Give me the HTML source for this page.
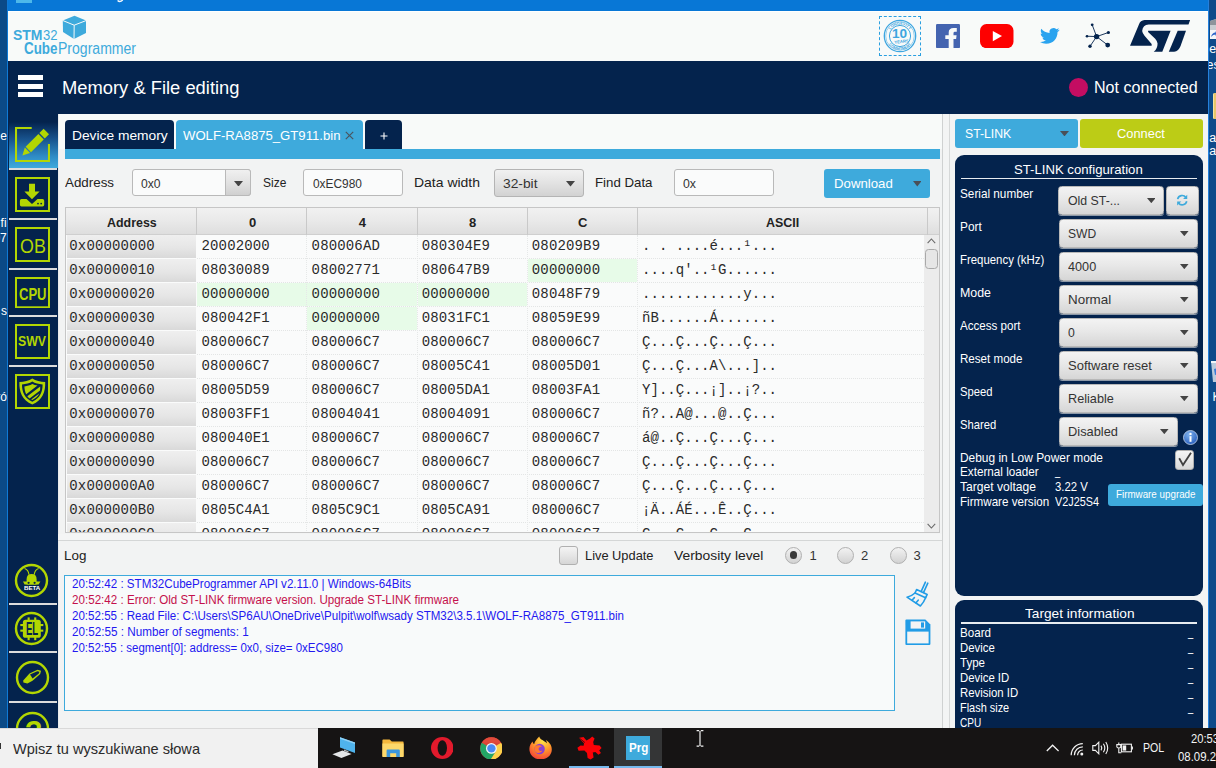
<!DOCTYPE html>
<html lang="pl"><head><meta charset="utf-8"><title>STM32CubeProgrammer</title>
<style>
html,body{margin:0;padding:0;}
body{width:1216px;height:768px;overflow:hidden;position:relative;background:#f2f3f3;font-family:"Liberation Sans","DejaVu Sans",sans-serif;}
#app div,#app span,#app svg{position:absolute;box-sizing:border-box;}
#app{position:absolute;left:0;top:0;width:1216px;height:768px;overflow:hidden;}
.t{white-space:pre;line-height:1;}
.m{font-family:"Liberation Mono","DejaVu Sans Mono",monospace;}
</style></head>
<body><div id="app">
<div style="left:0px;top:0px;width:8px;height:728px;background:#0b4a87;"></div><div style="left:6.8px;top:0px;width:1.4px;height:728px;background:#0f7ad6;"></div><div style="left:1208px;top:0px;width:8px;height:728px;background:#0e4b8a;"></div><div style="left:1208px;top:0px;width:1px;height:728px;background:#2580dc;"></div><div style="left:0;top:0;width:7px;height:728px;overflow:hidden;"><span class="t" style="top:130.00px;font-size:12px;color:#ffffff;left:7.00px;transform:translateX(-100%);">e</span><span class="t" style="top:217.00px;font-size:12px;color:#ffffff;left:6.60px;transform:translateX(-100%);">fi</span><span class="t" style="top:232.00px;font-size:12px;color:#ffffff;left:6.80px;transform:translateX(-100%);">07</span><span class="t" style="top:305.00px;font-size:12px;color:#ffffff;left:7.00px;transform:translateX(-100%);">s</span><span class="t" style="top:391.00px;font-size:12px;color:#ffffff;left:7.00px;transform:translateX(-100%);">ró</span></div><div style="left:1209px;top:0;width:7px;height:728px;overflow:hidden;"><svg style="left:0.5px;top:18.6px;" width="16" height="20" viewBox="0 0 16 20"><path d="M0 2 L6 0 H16 V20 H0 Z" fill="#c9cdd2"/><path d="M0 2 L6 0 V6 H0 Z" fill="#8e949b"/><rect x="0" y="11" width="7" height="9" fill="#f4f6f8"/><path d="M1 18 Q2 13.5 5.5 13.5 V12 L7 15 L5.5 17 V15.6 Q3 15.6 1 18 Z" fill="#2a62c8"/></svg><span class="t" style="top:43.00px;font-size:12.5px;color:#ffffff;left:0.30px;">e</span><span class="t" style="top:59.00px;font-size:12.5px;color:#ffffff;left:-2.40px;">es</span><div style="left:3.6px;top:92.8px;width:8px;height:26.6px;background:#e8c66a;border-radius:1.5px;border-left:1px solid #f6e3a0;"></div><span class="t" style="top:132.00px;font-size:12.5px;color:#ffffff;left:0.20px;">ar</span><span class="t" style="top:145.00px;font-size:12.5px;color:#ffffff;left:0.20px;">ar</span><svg style="left:1.8px;top:358.7px;" width="14" height="23" viewBox="0 0 14 23"><path d="M0 2 H14 L12 23 H2 Z" fill="#d9e2ea" opacity="0.85"/><path d="M0 2 H14 V4 H0 Z" fill="#f1f5f8"/><path d="M3 10 L8 9 L9 15 L4 16 Z" fill="#3b7bd6"/></svg><span class="t" style="top:391.00px;font-size:12px;color:#ffffff;left:3.60px;">K</span></div><div style="left:8px;top:0px;width:1200px;height:11px;background:#0877d6;"></div><div style="left:16px;top:0px;width:16px;height:3px;background:#4db8ea;"></div><svg style="left:117px;top:0px;" width="7" height="3" viewBox="0 0 7 3"><path d="M0.6 0.4 Q2.8 2.6 5.8 0 " stroke="#f4f8fc" stroke-width="1.4" fill="none"/></svg><div style="left:8px;top:11px;width:1200px;height:50px;background:#f8faf9;"></div><div style="left:8px;top:11px;width:1200px;height:1px;background:#ffffff;"></div><div style="left:8px;top:61px;width:1200px;height:53px;background:#04234d;"></div><div style="left:8px;top:114px;width:49.5px;height:614px;background:#04234d;"></div><div style="left:57.5px;top:114px;width:1150.5px;height:614px;background:#f2f3f3;"></div><span class="t" style="top:28.00px;font-size:14.2px;color:#3eaadc;font-weight:700;left:13.00px;transform-origin:0 0;transform:scaleX(0.9849);">STM</span><span class="t" style="top:28.00px;font-size:14.2px;color:#3eaadc;left:43.30px;transform-origin:0 0;transform:scaleX(0.9188);">32</span><span class="t" style="top:40.00px;font-size:16.2px;color:#3eaadc;font-weight:700;left:23.75px;transform-origin:0 0;transform:scaleX(0.8278);">Cube</span><span class="t" style="top:41.00px;font-size:15.6px;color:#3eaadc;left:58.00px;transform-origin:0 0;transform:scaleX(0.9001);">Programmer</span><svg style="left:62px;top:15px;" width="25" height="25" viewBox="0 0 25 25"><path d="M12.5 0.8 L24 5.5 L24 18 L12 24 L1 17 L0.8 5.5 Z" fill="#3eaadc"/><path d="M1 5.6 L12.2 10.2 L24 5.6 M12.2 10.2 L12 24" stroke="#f8faf9" stroke-width="1" fill="none"/></svg><div style="left:18px;top:75px;width:25px;height:5px;background:#ffffff;"></div><div style="left:18px;top:83.7px;width:25px;height:5px;background:#ffffff;"></div><div style="left:18px;top:92.3px;width:25px;height:5px;background:#ffffff;"></div><span class="t" style="top:80.00px;font-size:17.6px;color:#ffffff;left:62.30px;transform-origin:0 0;transform:scaleX(1.0433);">Memory &amp; File editing</span><div style="left:1069px;top:78.2px;width:19px;height:19px;background:#c40d62;border-radius:50%;"></div><span class="t" style="top:80.00px;font-size:15.6px;color:#ffffff;left:1093.90px;transform-origin:0 0;transform:scaleX(1.0302);">Not connected</span><div style="left:9px;top:121.5px;width:48.5px;height:46.5px;background:linear-gradient(#04234d,#17508a 35%,#2f8cc6 75%,#3eaadc);"></div><div style="left:9px;top:168px;width:48.2px;height:2.2px;background:#dcdcdc;"></div><div style="left:9px;top:218.2px;width:48.2px;height:2.2px;background:#dcdcdc;"></div><div style="left:9px;top:268px;width:48.2px;height:2.2px;background:#dcdcdc;"></div><div style="left:9px;top:315.2px;width:48.2px;height:2.2px;background:#dcdcdc;"></div><div style="left:9px;top:365.2px;width:48.2px;height:2.2px;background:#dcdcdc;"></div><svg style="left:15px;top:127px;" width="35" height="35" viewBox="0 0 35 35"><path d="M16.7 1 H1 V34 H34 V17" fill="none" stroke="#b3d602" stroke-width="2.1"/><g transform="translate(7.4,28.4) rotate(-45)" fill="#b3d602"><path d="M0 0 L7.2 -3.8 L7.2 3.8 Z"/><rect x="8.4" y="-3.8" width="18" height="7.6"/><rect x="27.8" y="-3.8" width="6" height="7.6"/></g></svg><svg style="left:15px;top:177px;" width="35" height="35" viewBox="0 0 35 35"><rect x="1" y="1" width="33" height="33" fill="none" stroke="#b3d602" stroke-width="2"/><path d="M14 6.7 H20 V14.5 H24.6 L17 22.3 L9.4 14.5 H14 Z" fill="#b3d602"/><path d="M6.5 22 H11.5 L17 27 L22.5 22 H27.5 Q29.2 22 29.2 23.7 V27.8 Q29.2 29.5 27.5 29.5 H6.5 Q4.9 29.5 4.9 27.8 V23.7 Q4.9 22 6.5 22 Z" fill="#b3d602"/><circle cx="23" cy="26.6" r="0.9" fill="#04234d"/><circle cx="26.2" cy="26.6" r="0.9" fill="#04234d"/></svg><svg style="left:15px;top:227px;" width="35" height="35" viewBox="0 0 35 35"><rect x="1" y="1" width="33" height="33" fill="none" stroke="#b3d602" stroke-width="2"/></svg><span class="t" style="top:235.00px;font-size:21px;color:#b3d602;left:19.60px;transform-origin:0 0;transform:scaleX(0.8503);">OB</span><svg style="left:15px;top:277px;" width="35" height="31.3" viewBox="0 0 35 31.3"><rect x="1" y="1" width="33" height="29.3" fill="none" stroke="#b3d602" stroke-width="2"/></svg><span class="t" style="top:286.00px;font-size:16.5px;color:#b3d602;font-weight:700;left:18.75px;transform-origin:0 0;transform:scaleX(0.7892);">CPU</span><svg style="left:15px;top:324px;" width="35" height="35" viewBox="0 0 35 35"><rect x="1" y="1" width="33" height="33" fill="none" stroke="#b3d602" stroke-width="2"/></svg><span class="t" style="top:333.00px;font-size:15px;color:#b3d602;font-weight:700;left:18.30px;transform-origin:0 0;transform:scaleX(0.8194);">SWV</span><svg style="left:15px;top:374px;" width="35" height="35" viewBox="0 0 35 35"><rect x="1" y="1" width="33" height="33" fill="none" stroke="#b3d602" stroke-width="2"/><path d="M17.3 4.6 C14 7 9 8 4.4 8 C4 18 7 26 17.3 30.6 C27.6 26 30.6 18 30.2 8 C25.6 8 20.6 7 17.3 4.6 Z" fill="#b3d602"/><path d="M17.3 7.6 C14.5 9.4 11 10.3 7 10.5 C7 18 9.5 24 17.3 27.8 C25.1 24 27.6 18 27.6 10.5 C23.6 10.3 20.1 9.4 17.3 7.6 Z" fill="#04234d"/><path d="M17.3 10 C15 11.3 12.4 12.1 9.4 12.4 C9.6 15.5 10 18 11.2 20.2 L22.5 11.6 C20.5 11.3 18.8 10.8 17.3 10 Z M25.2 12.4 L12.3 22.2 C13 23.1 13.8 23.8 14.6 24.4 L25 16.6 C25.2 15.3 25.2 13.9 25.2 12.4 Z M24.3 19.6 L16.2 25.4 L17.3 26 C21 24.2 23.2 22.2 24.3 19.6 Z" fill="#b3d602"/></svg><div style="left:9px;top:603.2px;width:48.2px;height:2px;background:#dcdcdc;"></div><div style="left:9px;top:651.2px;width:48.2px;height:2px;background:#dcdcdc;"></div><div style="left:9px;top:701.2px;width:48.2px;height:2px;background:#dcdcdc;"></div><svg style="left:14px;top:562.5px;" width="35" height="35" viewBox="0 0 35 35"><circle cx="17.5" cy="17.5" r="15.5" fill="none" stroke="#b3d602" stroke-width="2.4"/><path d="M12.6 21.6 V16.2 Q12.6 11 17.6 11 Q22.6 11 22.6 16.2 V21.6 Z" fill="#b3d602"/><path d="M9 18.6 H26.4 L24.6 21.6 H10.6 Z" fill="#b3d602"/><path d="M15 11.8 C14.6 8.5 13 6.4 10.6 5.6 M20.2 11.8 C20.6 8.5 22.2 6.4 24.6 5.6" stroke="#b3d602" stroke-width="1.1" fill="none"/><circle cx="14.6" cy="19.8" r="1.1" fill="#04234d"/><circle cx="20.6" cy="19.8" r="1.1" fill="#04234d"/></svg><span class="t" style="top:585.00px;font-size:6.2px;color:#ffffff;font-weight:700;left:23.55px;transform-origin:0 0;transform:scaleX(0.9945);">BETA</span><svg style="left:14px;top:611px;" width="35" height="35" viewBox="0 0 35 35"><circle cx="17.5" cy="17.5" r="15.5" fill="none" stroke="#b3d602" stroke-width="2.4"/><rect x="13.6" y="6.4" width="2.1" height="22.8" fill="#b3d602"/><rect x="20.2" y="6.4" width="2.1" height="22.8" fill="#b3d602"/><rect x="6.3" y="13" width="23" height="2.1" fill="#b3d602"/><rect x="6.3" y="18.6" width="23" height="2.1" fill="#b3d602"/><rect x="8.9" y="8.8" width="17.9" height="18" rx="2.6" fill="#b3d602"/></svg><span class="t" style="top:621.00px;font-size:17.5px;color:#04234d;font-weight:700;left:25.50px;transform-origin:0 0;transform:scaleX(0.5453);">EL</span><svg style="left:14.5px;top:660.3px;" width="35" height="35" viewBox="0 0 35 35"><circle cx="17.5" cy="17.5" r="15.5" fill="none" stroke="#b3d602" stroke-width="2.4"/><path d="M8.2 20.5 L14.5 13.5 L22.5 9.8 L26 10.8 L25.2 14 L17.5 20.8 L12.4 23.4 L8.4 22.6 Z" fill="#b3d602"/><path d="M15 14.6 L22.3 11.2 L24.4 11.8 L23.9 13.4 L17.6 18.4 Z" fill="#04234d"/></svg><svg style="left:14.5px;top:711.2px;" width="35" height="35" viewBox="0 0 35 35"><circle cx="17.5" cy="17.5" r="15.5" fill="none" stroke="#b3d602" stroke-width="2.4"/></svg><span class="t" style="top:717.00px;font-size:29px;color:#b3d602;font-weight:700;left:33.70px;transform:translateX(-50%);">?</span><div style="left:58px;top:114px;width:884px;height:35px;background:#f8faf9;"></div><div style="left:57.5px;top:114px;width:1px;height:614px;background:#e9ebeb;"></div><div style="left:65px;top:120px;width:109px;height:29px;background:#04234d;border-radius:4px 4px 0 0;"></div><div style="left:176px;top:120px;width:187px;height:30px;background:#3eaadc;border-radius:4px 4px 0 0;"></div><div style="left:365px;top:120px;width:36.7px;height:29px;background:#04234d;border-radius:4px 4px 0 0;"></div><div style="left:65px;top:149px;width:875px;height:9.7px;background:#3eaadc;"></div><span class="t" style="top:129.00px;font-size:13.6px;color:#ffffff;left:71.50px;transform-origin:0 0;transform:scaleX(1.0135);">Device memory</span><span class="t" style="top:129.00px;font-size:13.6px;color:#ffffff;left:182.50px;transform-origin:0 0;transform:scaleX(0.9665);">WOLF-RA8875_GT911.bin</span><svg style="left:344.5px;top:130.5px;" width="9" height="9" viewBox="0 0 9 9"><path d="M0.8 0.8 L8.2 8.2 M8.2 0.8 L0.8 8.2" stroke="#4a5560" stroke-width="1.2" fill="none"/></svg><svg style="left:379.5px;top:131.5px;" width="8" height="8" viewBox="0 0 8 8"><path d="M4 0.5 V7.5 M0.5 4 H7.5" stroke="#ffffff" stroke-width="1.1" fill="none"/></svg><span class="t" style="top:176.00px;font-size:13px;color:#222;left:65.30px;transform-origin:0 0;transform:scaleX(1.0272);">Address</span><div style="left:132.4px;top:169.2px;width:119px;height:27.2px;background:#fafbfb;border:1px solid #b9b9b9;border-radius:3px;"></div><div style="left:225.4px;top:169.2px;width:26px;height:27.2px;background:linear-gradient(#f0f0f0,#e2e2e2 50%,#d0d0d0);border:1px solid #b9b9b9;border-radius:0 3px 3px 0;"></div><svg style="left:234.2px;top:180.8px;" width="9" height="5.6" viewBox="0 0 9 5.6"><path d="M0 0 H9 L4.5 5.6 Z" fill="#444"/></svg><span class="t" style="top:178.00px;font-size:12.4px;color:#333;left:141.30px;transform-origin:0 0;transform:scaleX(0.9808);">0x0</span><span class="t" style="top:176.00px;font-size:13px;color:#222;left:262.70px;transform-origin:0 0;transform:scaleX(0.9211);">Size</span><div style="left:303px;top:169.2px;width:100px;height:27.2px;background:#fafbfb;border:1px solid #b9b9b9;border-radius:3px;"></div><span class="t" style="top:178.00px;font-size:12.4px;color:#333;left:312.70px;transform-origin:0 0;transform:scaleX(0.9611);">0xEC980</span><span class="t" style="top:176.00px;font-size:13px;color:#222;left:413.50px;transform-origin:0 0;transform:scaleX(1.0745);">Data width</span><div style="left:494px;top:169.2px;width:89.6px;height:27.6px;background:linear-gradient(#f1f1f1,#e4e4e4 45%,#d2d2d2);border:1px solid #b4b4b4;border-radius:3px;"></div><span class="t" style="top:178.00px;font-size:12.4px;color:#333;left:503.30px;transform-origin:0 0;transform:scaleX(1.1129);">32-bit</span><svg style="left:566px;top:181px;" width="9" height="5.6" viewBox="0 0 9 5.6"><path d="M0 0 H9 L4.5 5.6 Z" fill="#444"/></svg><span class="t" style="top:176.00px;font-size:13px;color:#222;left:595.00px;transform-origin:0 0;transform:scaleX(1.0200);">Find Data</span><div style="left:674px;top:169.2px;width:99.6px;height:27.2px;background:#fafbfb;border:1px solid #b9b9b9;border-radius:3px;"></div><span class="t" style="top:178.00px;font-size:12.4px;color:#333;left:683.00px;transform-origin:0 0;transform:scaleX(0.9928);">0x</span><div style="left:824px;top:168.8px;width:106px;height:29.2px;background:#3eaadc;border-radius:3px;"></div><span class="t" style="top:178.00px;font-size:12.6px;color:#ffffff;left:833.80px;transform-origin:0 0;transform:scaleX(1.0497);">Download</span><svg style="left:912.6px;top:181.2px;" width="8.6" height="5.4" viewBox="0 0 8.6 5.4"><path d="M0 0 H8.6 L4.3 5.4 Z" fill="#4a5058"/></svg><div style="left:65px;top:207.3px;width:874.8px;height:325.7px;background:#fafbfb;border:1px solid #c6c6c6;"></div><div style="left:66px;top:208px;width:872.8px;height:26.6px;background:linear-gradient(#f1f1f1,#e9e9e9 50%,#dedede);border-bottom:1px solid #cfcfcf;"></div><div style="left:196.3px;top:208px;width:1px;height:26.6px;background:#c9c9c9;"></div><div style="left:306.3px;top:208px;width:1px;height:26.6px;background:#c9c9c9;"></div><div style="left:416.5px;top:208px;width:1px;height:26.6px;background:#c9c9c9;"></div><div style="left:526.5px;top:208px;width:1px;height:26.6px;background:#c9c9c9;"></div><div style="left:636.5px;top:208px;width:1px;height:26.6px;background:#c9c9c9;"></div><div style="left:926.9px;top:208px;width:1px;height:26.6px;background:#c9c9c9;"></div><span class="t" style="top:216.00px;font-size:13px;color:#222;font-weight:700;left:107.15px;transform-origin:0 0;transform:scaleX(0.9552);">Address</span><span class="t" style="top:216.00px;font-size:13px;color:#222;font-weight:700;left:252.60px;transform:translateX(-50%);">0</span><span class="t" style="top:216.00px;font-size:13px;color:#222;font-weight:700;left:362.30px;transform:translateX(-50%);">4</span><span class="t" style="top:216.00px;font-size:13px;color:#222;font-weight:700;left:472.70px;transform:translateX(-50%);">8</span><span class="t" style="top:216.00px;font-size:13px;color:#222;font-weight:700;left:582.70px;transform:translateX(-50%);">C</span><span class="t" style="top:216.00px;font-size:13px;color:#222;font-weight:700;left:766.00px;transform-origin:0 0;transform:scaleX(0.9575);">ASCII</span><div style="left:66.5px;top:234.5px;width:857px;height:297.5px;overflow:hidden;"><div style="left:0px;top:0px;width:129.8px;height:23.4px;background:linear-gradient(#efefef,#e6e6e6 55%,#d9d9d9);"></div><div style="left:130px;top:23.6px;width:727px;height:1px;border-top:1px dotted #e3e5e5;"></div><span class="t m" style="top:4.00px;font-size:14px;color:#2a2a2a;left:2.80px;letter-spacing:0.15px;">0x00000000</span><span class="t m" style="top:4.00px;font-size:14px;color:#2a2a2a;left:135.00px;letter-spacing:0.15px;">20002000</span><span class="t m" style="top:4.00px;font-size:14px;color:#2a2a2a;left:245.10px;letter-spacing:0.15px;">080006AD</span><span class="t m" style="top:4.00px;font-size:14px;color:#2a2a2a;left:355.20px;letter-spacing:0.15px;">080304E9</span><span class="t m" style="top:4.00px;font-size:14px;color:#2a2a2a;left:465.30px;letter-spacing:0.15px;">080209B9</span><span class="t m" style="top:4.00px;font-size:14px;color:#2a2a2a;left:575.50px;letter-spacing:0.04px;">. . ....é...¹...</span><div style="left:0px;top:24px;width:129.8px;height:23.4px;background:linear-gradient(#efefef,#e6e6e6 55%,#d9d9d9);"></div><div style="left:461.0px;top:24px;width:109.5px;height:23.6px;background:#e7fbe8;"></div><div style="left:130px;top:47.6px;width:727px;height:1px;border-top:1px dotted #e3e5e5;"></div><span class="t m" style="top:28.00px;font-size:14px;color:#2a2a2a;left:2.80px;letter-spacing:0.15px;">0x00000010</span><span class="t m" style="top:28.00px;font-size:14px;color:#2a2a2a;left:135.00px;letter-spacing:0.15px;">08030089</span><span class="t m" style="top:28.00px;font-size:14px;color:#2a2a2a;left:245.10px;letter-spacing:0.15px;">08002771</span><span class="t m" style="top:28.00px;font-size:14px;color:#2a2a2a;left:355.20px;letter-spacing:0.15px;">080647B9</span><span class="t m" style="top:28.00px;font-size:14px;color:#2a2a2a;left:465.30px;letter-spacing:0.15px;">00000000</span><span class="t m" style="top:28.00px;font-size:14px;color:#2a2a2a;left:575.50px;letter-spacing:0.04px;">....q'..¹G......</span><div style="left:0px;top:48px;width:129.8px;height:23.4px;background:linear-gradient(#efefef,#e6e6e6 55%,#d9d9d9);"></div><div style="left:130.8px;top:48px;width:109.5px;height:23.6px;background:#e7fbe8;"></div><div style="left:240.8px;top:48px;width:109.5px;height:23.6px;background:#e7fbe8;"></div><div style="left:351.0px;top:48px;width:109.5px;height:23.6px;background:#e7fbe8;"></div><div style="left:130px;top:71.6px;width:727px;height:1px;border-top:1px dotted #e3e5e5;"></div><span class="t m" style="top:52.00px;font-size:14px;color:#2a2a2a;left:2.80px;letter-spacing:0.15px;">0x00000020</span><span class="t m" style="top:52.00px;font-size:14px;color:#2a2a2a;left:135.00px;letter-spacing:0.15px;">00000000</span><span class="t m" style="top:52.00px;font-size:14px;color:#2a2a2a;left:245.10px;letter-spacing:0.15px;">00000000</span><span class="t m" style="top:52.00px;font-size:14px;color:#2a2a2a;left:355.20px;letter-spacing:0.15px;">00000000</span><span class="t m" style="top:52.00px;font-size:14px;color:#2a2a2a;left:465.30px;letter-spacing:0.15px;">08048F79</span><span class="t m" style="top:52.00px;font-size:14px;color:#2a2a2a;left:575.50px;letter-spacing:0.04px;">............y...</span><div style="left:0px;top:72px;width:129.8px;height:23.4px;background:linear-gradient(#efefef,#e6e6e6 55%,#d9d9d9);"></div><div style="left:240.8px;top:72px;width:109.5px;height:23.6px;background:#e7fbe8;"></div><div style="left:130px;top:95.6px;width:727px;height:1px;border-top:1px dotted #e3e5e5;"></div><span class="t m" style="top:76.00px;font-size:14px;color:#2a2a2a;left:2.80px;letter-spacing:0.15px;">0x00000030</span><span class="t m" style="top:76.00px;font-size:14px;color:#2a2a2a;left:135.00px;letter-spacing:0.15px;">080042F1</span><span class="t m" style="top:76.00px;font-size:14px;color:#2a2a2a;left:245.10px;letter-spacing:0.15px;">00000000</span><span class="t m" style="top:76.00px;font-size:14px;color:#2a2a2a;left:355.20px;letter-spacing:0.15px;">08031FC1</span><span class="t m" style="top:76.00px;font-size:14px;color:#2a2a2a;left:465.30px;letter-spacing:0.15px;">08059E99</span><span class="t m" style="top:76.00px;font-size:14px;color:#2a2a2a;left:575.50px;letter-spacing:0.04px;">ñB......Á.......</span><div style="left:0px;top:96px;width:129.8px;height:23.4px;background:linear-gradient(#efefef,#e6e6e6 55%,#d9d9d9);"></div><div style="left:130px;top:119.6px;width:727px;height:1px;border-top:1px dotted #e3e5e5;"></div><span class="t m" style="top:100.00px;font-size:14px;color:#2a2a2a;left:2.80px;letter-spacing:0.15px;">0x00000040</span><span class="t m" style="top:100.00px;font-size:14px;color:#2a2a2a;left:135.00px;letter-spacing:0.15px;">080006C7</span><span class="t m" style="top:100.00px;font-size:14px;color:#2a2a2a;left:245.10px;letter-spacing:0.15px;">080006C7</span><span class="t m" style="top:100.00px;font-size:14px;color:#2a2a2a;left:355.20px;letter-spacing:0.15px;">080006C7</span><span class="t m" style="top:100.00px;font-size:14px;color:#2a2a2a;left:465.30px;letter-spacing:0.15px;">080006C7</span><span class="t m" style="top:100.00px;font-size:14px;color:#2a2a2a;left:575.50px;letter-spacing:0.04px;">Ç...Ç...Ç...Ç...</span><div style="left:0px;top:120px;width:129.8px;height:23.4px;background:linear-gradient(#efefef,#e6e6e6 55%,#d9d9d9);"></div><div style="left:130px;top:143.6px;width:727px;height:1px;border-top:1px dotted #e3e5e5;"></div><span class="t m" style="top:124.00px;font-size:14px;color:#2a2a2a;left:2.80px;letter-spacing:0.15px;">0x00000050</span><span class="t m" style="top:124.00px;font-size:14px;color:#2a2a2a;left:135.00px;letter-spacing:0.15px;">080006C7</span><span class="t m" style="top:124.00px;font-size:14px;color:#2a2a2a;left:245.10px;letter-spacing:0.15px;">080006C7</span><span class="t m" style="top:124.00px;font-size:14px;color:#2a2a2a;left:355.20px;letter-spacing:0.15px;">08005C41</span><span class="t m" style="top:124.00px;font-size:14px;color:#2a2a2a;left:465.30px;letter-spacing:0.15px;">08005D01</span><span class="t m" style="top:124.00px;font-size:14px;color:#2a2a2a;left:575.50px;letter-spacing:0.04px;">Ç...Ç...A\...]..</span><div style="left:0px;top:144px;width:129.8px;height:23.4px;background:linear-gradient(#efefef,#e6e6e6 55%,#d9d9d9);"></div><div style="left:130px;top:167.6px;width:727px;height:1px;border-top:1px dotted #e3e5e5;"></div><span class="t m" style="top:148.00px;font-size:14px;color:#2a2a2a;left:2.80px;letter-spacing:0.15px;">0x00000060</span><span class="t m" style="top:148.00px;font-size:14px;color:#2a2a2a;left:135.00px;letter-spacing:0.15px;">08005D59</span><span class="t m" style="top:148.00px;font-size:14px;color:#2a2a2a;left:245.10px;letter-spacing:0.15px;">080006C7</span><span class="t m" style="top:148.00px;font-size:14px;color:#2a2a2a;left:355.20px;letter-spacing:0.15px;">08005DA1</span><span class="t m" style="top:148.00px;font-size:14px;color:#2a2a2a;left:465.30px;letter-spacing:0.15px;">08003FA1</span><span class="t m" style="top:148.00px;font-size:14px;color:#2a2a2a;left:575.50px;letter-spacing:0.04px;">Y]..Ç...¡]..¡?..</span><div style="left:0px;top:168px;width:129.8px;height:23.4px;background:linear-gradient(#efefef,#e6e6e6 55%,#d9d9d9);"></div><div style="left:130px;top:191.6px;width:727px;height:1px;border-top:1px dotted #e3e5e5;"></div><span class="t m" style="top:172.00px;font-size:14px;color:#2a2a2a;left:2.80px;letter-spacing:0.15px;">0x00000070</span><span class="t m" style="top:172.00px;font-size:14px;color:#2a2a2a;left:135.00px;letter-spacing:0.15px;">08003FF1</span><span class="t m" style="top:172.00px;font-size:14px;color:#2a2a2a;left:245.10px;letter-spacing:0.15px;">08004041</span><span class="t m" style="top:172.00px;font-size:14px;color:#2a2a2a;left:355.20px;letter-spacing:0.15px;">08004091</span><span class="t m" style="top:172.00px;font-size:14px;color:#2a2a2a;left:465.30px;letter-spacing:0.15px;">080006C7</span><span class="t m" style="top:172.00px;font-size:14px;color:#2a2a2a;left:575.50px;letter-spacing:0.04px;">ñ?..A@...@..Ç...</span><div style="left:0px;top:192px;width:129.8px;height:23.4px;background:linear-gradient(#efefef,#e6e6e6 55%,#d9d9d9);"></div><div style="left:130px;top:215.6px;width:727px;height:1px;border-top:1px dotted #e3e5e5;"></div><span class="t m" style="top:196.00px;font-size:14px;color:#2a2a2a;left:2.80px;letter-spacing:0.15px;">0x00000080</span><span class="t m" style="top:196.00px;font-size:14px;color:#2a2a2a;left:135.00px;letter-spacing:0.15px;">080040E1</span><span class="t m" style="top:196.00px;font-size:14px;color:#2a2a2a;left:245.10px;letter-spacing:0.15px;">080006C7</span><span class="t m" style="top:196.00px;font-size:14px;color:#2a2a2a;left:355.20px;letter-spacing:0.15px;">080006C7</span><span class="t m" style="top:196.00px;font-size:14px;color:#2a2a2a;left:465.30px;letter-spacing:0.15px;">080006C7</span><span class="t m" style="top:196.00px;font-size:14px;color:#2a2a2a;left:575.50px;letter-spacing:0.04px;">á@..Ç...Ç...Ç...</span><div style="left:0px;top:216px;width:129.8px;height:23.4px;background:linear-gradient(#efefef,#e6e6e6 55%,#d9d9d9);"></div><div style="left:130px;top:239.6px;width:727px;height:1px;border-top:1px dotted #e3e5e5;"></div><span class="t m" style="top:220.00px;font-size:14px;color:#2a2a2a;left:2.80px;letter-spacing:0.15px;">0x00000090</span><span class="t m" style="top:220.00px;font-size:14px;color:#2a2a2a;left:135.00px;letter-spacing:0.15px;">080006C7</span><span class="t m" style="top:220.00px;font-size:14px;color:#2a2a2a;left:245.10px;letter-spacing:0.15px;">080006C7</span><span class="t m" style="top:220.00px;font-size:14px;color:#2a2a2a;left:355.20px;letter-spacing:0.15px;">080006C7</span><span class="t m" style="top:220.00px;font-size:14px;color:#2a2a2a;left:465.30px;letter-spacing:0.15px;">080006C7</span><span class="t m" style="top:220.00px;font-size:14px;color:#2a2a2a;left:575.50px;letter-spacing:0.04px;">Ç...Ç...Ç...Ç...</span><div style="left:0px;top:240px;width:129.8px;height:23.4px;background:linear-gradient(#efefef,#e6e6e6 55%,#d9d9d9);"></div><div style="left:130px;top:263.6px;width:727px;height:1px;border-top:1px dotted #e3e5e5;"></div><span class="t m" style="top:244.00px;font-size:14px;color:#2a2a2a;left:2.80px;letter-spacing:0.15px;">0x000000A0</span><span class="t m" style="top:244.00px;font-size:14px;color:#2a2a2a;left:135.00px;letter-spacing:0.15px;">080006C7</span><span class="t m" style="top:244.00px;font-size:14px;color:#2a2a2a;left:245.10px;letter-spacing:0.15px;">080006C7</span><span class="t m" style="top:244.00px;font-size:14px;color:#2a2a2a;left:355.20px;letter-spacing:0.15px;">080006C7</span><span class="t m" style="top:244.00px;font-size:14px;color:#2a2a2a;left:465.30px;letter-spacing:0.15px;">080006C7</span><span class="t m" style="top:244.00px;font-size:14px;color:#2a2a2a;left:575.50px;letter-spacing:0.04px;">Ç...Ç...Ç...Ç...</span><div style="left:0px;top:264px;width:129.8px;height:23.4px;background:linear-gradient(#efefef,#e6e6e6 55%,#d9d9d9);"></div><div style="left:130px;top:287.6px;width:727px;height:1px;border-top:1px dotted #e3e5e5;"></div><span class="t m" style="top:268.00px;font-size:14px;color:#2a2a2a;left:2.80px;letter-spacing:0.15px;">0x000000B0</span><span class="t m" style="top:268.00px;font-size:14px;color:#2a2a2a;left:135.00px;letter-spacing:0.15px;">0805C4A1</span><span class="t m" style="top:268.00px;font-size:14px;color:#2a2a2a;left:245.10px;letter-spacing:0.15px;">0805C9C1</span><span class="t m" style="top:268.00px;font-size:14px;color:#2a2a2a;left:355.20px;letter-spacing:0.15px;">0805CA91</span><span class="t m" style="top:268.00px;font-size:14px;color:#2a2a2a;left:465.30px;letter-spacing:0.15px;">080006C7</span><span class="t m" style="top:268.00px;font-size:14px;color:#2a2a2a;left:575.50px;letter-spacing:0.04px;">¡Ä..ÁÉ...Ê..Ç...</span><div style="left:0px;top:288px;width:129.8px;height:23.4px;background:linear-gradient(#efefef,#e6e6e6 55%,#d9d9d9);"></div><div style="left:130px;top:311.6px;width:727px;height:1px;border-top:1px dotted #e3e5e5;"></div><span class="t m" style="top:292.00px;font-size:14px;color:#2a2a2a;left:2.80px;letter-spacing:0.15px;">0x000000C0</span><span class="t m" style="top:292.00px;font-size:14px;color:#2a2a2a;left:135.00px;letter-spacing:0.15px;">080006C7</span><span class="t m" style="top:292.00px;font-size:14px;color:#2a2a2a;left:245.10px;letter-spacing:0.15px;">080006C7</span><span class="t m" style="top:292.00px;font-size:14px;color:#2a2a2a;left:355.20px;letter-spacing:0.15px;">080006C7</span><span class="t m" style="top:292.00px;font-size:14px;color:#2a2a2a;left:465.30px;letter-spacing:0.15px;">080006C7</span><span class="t m" style="top:292.00px;font-size:14px;color:#2a2a2a;left:575.50px;letter-spacing:0.04px;">Ç...Ç...Ç...Ç...</span><div style="left:239.8px;top:0px;width:1px;height:300px;border-left:1px dotted #e6e8e8;"></div><div style="left:350.0px;top:0px;width:1px;height:300px;border-left:1px dotted #e6e8e8;"></div><div style="left:460.0px;top:0px;width:1px;height:300px;border-left:1px dotted #e6e8e8;"></div><div style="left:570.0px;top:0px;width:1px;height:300px;border-left:1px dotted #e6e8e8;"></div></div><div style="left:923.5px;top:234.5px;width:15.3px;height:297.5px;background:#ececec;"></div><svg style="left:927.2px;top:237.6px;" width="9" height="6" viewBox="0 0 9 6"><path d="M0.6 5.2 L4.4 1 L8.2 5.2" stroke="#6a6a6a" stroke-width="1.1" fill="none"/></svg><svg style="left:927.2px;top:523.4px;" width="9" height="6" viewBox="0 0 9 6"><path d="M0.6 0.8 L4.4 5 L8.2 0.8" stroke="#6a6a6a" stroke-width="1.1" fill="none"/></svg><div style="left:925px;top:249.2px;width:12.6px;height:19.4px;background:#e6e6e6;border:1px solid #a9a9a9;border-radius:3.5px;"></div><div style="left:58px;top:533.5px;width:884px;height:7.5px;background:#f4f5f5;"></div><div style="left:58px;top:540.2px;width:884px;height:1px;background:#d4d6d6;"></div><span class="t" style="top:549.00px;font-size:13px;color:#222;left:63.60px;transform-origin:0 0;transform:scaleX(1.0321);">Log</span><div style="left:559px;top:546px;width:18.6px;height:18.6px;background:linear-gradient(#f4f4f4,#e6e6e6 50%,#d6d6d6);border:1px solid #b0b0b0;border-radius:3px;"></div><span class="t" style="top:550.00px;font-size:12.3px;color:#222;left:584.60px;transform-origin:0 0;transform:scaleX(1.0436);">Live Update</span><span class="t" style="top:550.00px;font-size:12.8px;color:#222;left:674.40px;transform-origin:0 0;transform:scaleX(1.0834);">Verbosity level</span><div style="left:785.0px;top:546.5px;width:17px;height:17px;background:linear-gradient(#f2f2f2,#e2e2e2 50%,#d2d2d2);border:1px solid #b0b0b0;border-radius:50%;"></div><div style="left:789.9px;top:551.4px;width:7.2px;height:7.2px;background:#3a3a3a;border-radius:50%;"></div><div style="left:837.1px;top:546.5px;width:17px;height:17px;background:linear-gradient(#f2f2f2,#e2e2e2 50%,#d2d2d2);border:1px solid #b0b0b0;border-radius:50%;"></div><div style="left:889.5px;top:546.5px;width:17px;height:17px;background:linear-gradient(#f2f2f2,#e2e2e2 50%,#d2d2d2);border:1px solid #b0b0b0;border-radius:50%;"></div><span class="t" style="top:549.00px;font-size:13px;color:#333;left:809.60px;">1</span><span class="t" style="top:549.00px;font-size:13px;color:#333;left:861.00px;">2</span><span class="t" style="top:549.00px;font-size:13px;color:#333;left:913.40px;">3</span><div style="left:64px;top:575.3px;width:830.8px;height:136px;background:#f8fafa;border:1px solid #3eaadc;"></div><span class="t" style="top:578.00px;font-size:12px;color:#2318f0;left:72.00px;transform-origin:0 0;transform:scaleX(0.9675);">20:52:42 : STM32CubeProgrammer API v2.11.0 | Windows-64Bits</span><span class="t" style="top:594.00px;font-size:12px;color:#c4104c;left:72.00px;transform-origin:0 0;transform:scaleX(0.9688);">20:52:42 : Error: Old ST-LINK firmware version. Upgrade ST-LINK firmware</span><span class="t" style="top:610.00px;font-size:12px;color:#2318f0;left:72.00px;transform-origin:0 0;transform:scaleX(0.9639);">20:52:55 : Read File: C:\Users\SP6AU\OneDrive\Pulpit\wolf\wsady STM32\3.5.1\WOLF-RA8875_GT911.bin</span><span class="t" style="top:626.00px;font-size:12px;color:#2318f0;left:72.00px;transform-origin:0 0;transform:scaleX(0.9739);">20:52:55 : Number of segments: 1</span><span class="t" style="top:642.00px;font-size:12px;color:#2318f0;left:72.00px;transform-origin:0 0;transform:scaleX(0.9581);">20:52:55 : segment[0]: address= 0x0, size= 0xEC980</span><svg style="left:905px;top:580px;" width="26" height="28" viewBox="0 0 26 28"><g fill="none" stroke="#219ce6" stroke-width="1.6" stroke-linejoin="round" stroke-linecap="round"><path d="M20.4 2.2 L16.2 11.4 M22.8 3.2 L18.6 12.4"/><path d="M11.6 9.6 L22.2 14.4 L20.6 17.8 L10 13 Z"/><path d="M10 13 C7.4 15.4 5 16.6 2 17.2 L15.4 26 C17.6 23.6 19.4 21 20.6 17.8"/><path d="M7 20.2 L9.4 17.6 M11 22.8 L13.2 20.2"/></g></svg><svg style="left:905px;top:618.6px;" width="26" height="27" viewBox="0 0 26 27"><path d="M0.4 1.5 Q0.4 0.5 1.4 0.5 H20.4 L25.4 5.4 V25.1 Q25.4 26.1 24.4 26.1 H1.4 Q0.4 26.1 0.4 25.1 Z" fill="#219ce6"/><rect x="5.6" y="2.4" width="14.6" height="7.2" fill="#f3f4f4"/><rect x="16" y="3.4" width="3" height="5.2" fill="#219ce6"/><rect x="2.2" y="12.6" width="21.4" height="11.8" fill="#f3f4f4"/></svg><div style="left:942.2px;top:114px;width:1px;height:614px;background:#cfd1d1;"></div><div style="left:943.2px;top:114px;width:6px;height:614px;background:#f3f4f4;"></div><div style="left:949.2px;top:114px;width:1px;height:614px;background:#d6d8d8;"></div><div style="left:950.2px;top:114px;width:257.8px;height:614px;background:#f3f4f4;"></div><div style="left:955px;top:119px;width:123px;height:29px;background:#3eaadc;border-radius:3px;"></div><span class="t" style="top:128.00px;font-size:12.6px;color:#ffffff;left:964.60px;transform-origin:0 0;transform:scaleX(0.9728);">ST-LINK</span><svg style="left:1060px;top:131px;" width="9" height="5.4" viewBox="0 0 9 5.4"><path d="M0 0 H9 L4.5 5.4 Z" fill="#4a5058"/></svg><div style="left:1080px;top:119px;width:122.9px;height:29px;background:#bccc16;border-radius:3px;"></div><span class="t" style="top:128.00px;font-size:12.8px;color:#ffffff;left:1117.25px;transform-origin:0 0;transform:scaleX(1.0048);">Connect</span><div style="left:955px;top:155px;width:247.9px;height:441px;background:#04234d;border-radius:9px;"></div><span class="t" style="top:163.00px;font-size:13.2px;color:#ffffff;left:1014.45px;transform-origin:0 0;transform:scaleX(0.9976);">ST-LINK configuration</span><div style="left:961px;top:177.8px;width:236px;height:1.6px;background:#e8ecf0;"></div><div style="left:1058.3px;top:186.2px;width:105.8px;height:28.4px;background:linear-gradient(#f3f3f3,#e8e8e8 45%,#d6d6d6);border:1px solid #b8b8b8;border-radius:3.5px;box-shadow:0 1px 0 #8d99a8;"></div><span class="t" style="top:188.00px;font-size:12.2px;color:#ffffff;left:960.30px;transform-origin:0 0;transform:scaleX(0.9647);">Serial number</span><span class="t" style="top:195.00px;font-size:12.8px;color:#333;left:1067.50px;transform-origin:0 0;transform:scaleX(0.9621);">Old ST-...</span><svg style="left:1146.5px;top:197.89999999999998px;" width="8.6" height="5.2" viewBox="0 0 8.6 5.2"><path d="M0 0 H8.6 L4.3 5.2 Z" fill="#444"/></svg><div style="left:1165.6px;top:186.2px;width:33px;height:28.4px;background:linear-gradient(#f3f3f3,#e8e8e8 45%,#d6d6d6);border:1px solid #b8b8b8;border-radius:3.5px;box-shadow:0 1px 0 #8d99a8;"></div><svg style="left:1176px;top:193.8px;" width="12.4" height="12.4" viewBox="0 0 15 15"><g fill="none" stroke="#3eaadc" stroke-width="2"><path d="M2 6.2 A5.6 5.6 0 0 1 12 4.2"/><path d="M13 8.8 A5.6 5.6 0 0 1 3 10.8"/></g><path d="M13.6 1 V6 H8.6 Z M1.4 14 V9 H6.4 Z" fill="#3eaadc"/></svg><div style="left:1059px;top:219.2px;width:138.8px;height:28.4px;background:linear-gradient(#f3f3f3,#e8e8e8 45%,#d6d6d6);border:1px solid #b8b8b8;border-radius:3.5px;box-shadow:0 1px 0 #8d99a8;"></div><span class="t" style="top:221.00px;font-size:12.2px;color:#ffffff;left:960.30px;transform-origin:0 0;transform:scaleX(0.9705);">Port</span><span class="t" style="top:228.00px;font-size:12.8px;color:#333;left:1068.20px;transform-origin:0 0;transform:scaleX(0.9444);">SWD</span><svg style="left:1180.2px;top:230.89999999999998px;" width="8.6" height="5.2" viewBox="0 0 8.6 5.2"><path d="M0 0 H8.6 L4.3 5.2 Z" fill="#444"/></svg><div style="left:1059px;top:252.2px;width:138.8px;height:28.4px;background:linear-gradient(#f3f3f3,#e8e8e8 45%,#d6d6d6);border:1px solid #b8b8b8;border-radius:3.5px;box-shadow:0 1px 0 #8d99a8;"></div><span class="t" style="top:254.00px;font-size:12.2px;color:#ffffff;left:960.30px;transform-origin:0 0;transform:scaleX(0.9347);">Frequency (kHz)</span><span class="t" style="top:261.00px;font-size:12.8px;color:#333;left:1068.20px;transform-origin:0 0;transform:scaleX(0.9906);">4000</span><svg style="left:1180.2px;top:263.9px;" width="8.6" height="5.2" viewBox="0 0 8.6 5.2"><path d="M0 0 H8.6 L4.3 5.2 Z" fill="#444"/></svg><div style="left:1059px;top:285.2px;width:138.8px;height:28.4px;background:linear-gradient(#f3f3f3,#e8e8e8 45%,#d6d6d6);border:1px solid #b8b8b8;border-radius:3.5px;box-shadow:0 1px 0 #8d99a8;"></div><span class="t" style="top:287.00px;font-size:12.2px;color:#ffffff;left:960.30px;transform-origin:0 0;transform:scaleX(1.0164);">Mode</span><span class="t" style="top:294.00px;font-size:12.8px;color:#333;left:1068.20px;transform-origin:0 0;transform:scaleX(1.0473);">Normal</span><svg style="left:1180.2px;top:296.9px;" width="8.6" height="5.2" viewBox="0 0 8.6 5.2"><path d="M0 0 H8.6 L4.3 5.2 Z" fill="#444"/></svg><div style="left:1059px;top:318.4px;width:138.8px;height:28.4px;background:linear-gradient(#f3f3f3,#e8e8e8 45%,#d6d6d6);border:1px solid #b8b8b8;border-radius:3.5px;box-shadow:0 1px 0 #8d99a8;"></div><span class="t" style="top:320.00px;font-size:12.2px;color:#ffffff;left:960.30px;transform-origin:0 0;transform:scaleX(0.9502);">Access port</span><span class="t" style="top:327.00px;font-size:12.8px;color:#333;left:1068.20px;transform-origin:0 0;transform:scaleX(0.9544);">0</span><svg style="left:1180.2px;top:330.09999999999997px;" width="8.6" height="5.2" viewBox="0 0 8.6 5.2"><path d="M0 0 H8.6 L4.3 5.2 Z" fill="#444"/></svg><div style="left:1059px;top:351.4px;width:138.8px;height:28.4px;background:linear-gradient(#f3f3f3,#e8e8e8 45%,#d6d6d6);border:1px solid #b8b8b8;border-radius:3.5px;box-shadow:0 1px 0 #8d99a8;"></div><span class="t" style="top:353.00px;font-size:12.2px;color:#ffffff;left:960.30px;transform-origin:0 0;transform:scaleX(0.9510);">Reset mode</span><span class="t" style="top:360.00px;font-size:12.8px;color:#333;left:1068.20px;transform-origin:0 0;transform:scaleX(1.0156);">Software reset</span><svg style="left:1180.2px;top:363.09999999999997px;" width="8.6" height="5.2" viewBox="0 0 8.6 5.2"><path d="M0 0 H8.6 L4.3 5.2 Z" fill="#444"/></svg><div style="left:1059px;top:384.4px;width:138.8px;height:28.4px;background:linear-gradient(#f3f3f3,#e8e8e8 45%,#d6d6d6);border:1px solid #b8b8b8;border-radius:3.5px;box-shadow:0 1px 0 #8d99a8;"></div><span class="t" style="top:386.00px;font-size:12.2px;color:#ffffff;left:960.30px;transform-origin:0 0;transform:scaleX(0.9220);">Speed</span><span class="t" style="top:393.00px;font-size:12.8px;color:#333;left:1068.20px;transform-origin:0 0;transform:scaleX(0.9903);">Reliable</span><svg style="left:1180.2px;top:396.09999999999997px;" width="8.6" height="5.2" viewBox="0 0 8.6 5.2"><path d="M0 0 H8.6 L4.3 5.2 Z" fill="#444"/></svg><div style="left:1059px;top:417.4px;width:118.6px;height:28.4px;background:linear-gradient(#f3f3f3,#e8e8e8 45%,#d6d6d6);border:1px solid #b8b8b8;border-radius:3.5px;box-shadow:0 1px 0 #8d99a8;"></div><span class="t" style="top:419.00px;font-size:12.2px;color:#ffffff;left:960.30px;transform-origin:0 0;transform:scaleX(0.9208);">Shared</span><span class="t" style="top:426.00px;font-size:12.8px;color:#333;left:1068.20px;transform-origin:0 0;transform:scaleX(1.0041);">Disabled</span><svg style="left:1160.0px;top:429.09999999999997px;" width="8.6" height="5.2" viewBox="0 0 8.6 5.2"><path d="M0 0 H8.6 L4.3 5.2 Z" fill="#444"/></svg><svg style="left:1183.3px;top:429.5px;" width="15" height="15" viewBox="0 0 15 15"><defs><radialGradient id="ig" cx="0.4" cy="0.3" r="0.8"><stop offset="0" stop-color="#7fb2ee"/><stop offset="1" stop-color="#1f56b8"/></radialGradient></defs><circle cx="7.5" cy="7.5" r="7" fill="url(#ig)" stroke="#c9d8ee" stroke-width="0.8"/><rect x="6.5" y="6.2" width="2" height="5.6" fill="#fff"/><circle cx="7.5" cy="3.9" r="1.2" fill="#fff"/></svg><span class="t" style="top:452.00px;font-size:12.2px;color:#ffffff;left:960.30px;transform-origin:0 0;transform:scaleX(0.9772);">Debug in Low Power mode</span><div style="left:1175.2px;top:450.2px;width:19px;height:19.4px;background:linear-gradient(#f6f6f6,#e8e8e8 50%,#d8d8d8);border:1px solid #b0b0b0;border-radius:3px;"></div><svg style="left:1177.6px;top:452.4px;" width="14" height="15" viewBox="0 0 14 15"><path d="M1.2 6.2 L5 13 L13 0.7" stroke="#404040" stroke-width="1.8" fill="none"/></svg><span class="t" style="top:466.00px;font-size:12.2px;color:#ffffff;left:960.30px;transform-origin:0 0;transform:scaleX(0.9599);">External loader</span><span class="t" style="top:465.00px;font-size:12.2px;color:#ffffff;left:1055.00px;transform-origin:0 0;transform:scaleX(0.7668);">_</span><span class="t" style="top:481.00px;font-size:12.2px;color:#ffffff;left:960.30px;transform-origin:0 0;transform:scaleX(0.9927);">Target voltage</span><span class="t" style="top:481.00px;font-size:12.2px;color:#ffffff;left:1055.00px;transform-origin:0 0;transform:scaleX(0.9305);">3.22 V</span><span class="t" style="top:496.00px;font-size:12.2px;color:#ffffff;left:960.30px;transform-origin:0 0;transform:scaleX(0.9543);">Firmware version</span><span class="t" style="top:496.00px;font-size:12.2px;color:#ffffff;left:1055.00px;transform-origin:0 0;transform:scaleX(0.8895);">V2J25S4</span><div style="left:1108px;top:484px;width:94.9px;height:22.2px;background:#3eaadc;border-radius:3px;"></div><span class="t" style="top:489.00px;font-size:10.5px;color:#ffffff;left:1115.75px;transform-origin:0 0;transform:scaleX(0.9331);">Firmware upgrade</span><div style="left:955px;top:600px;width:247.9px;height:140px;background:#04234d;border-radius:9px;"></div><span class="t" style="top:607.00px;font-size:13.2px;color:#ffffff;left:1024.55px;transform-origin:0 0;transform:scaleX(1.0373);">Target information</span><div style="left:961px;top:622.2px;width:236px;height:1.6px;background:#e8ecf0;"></div><span class="t" style="top:627.00px;font-size:12.2px;color:#ffffff;left:960.30px;transform-origin:0 0;transform:scaleX(0.9529);">Board</span><span class="t" style="top:626.00px;font-size:12.2px;color:#ffffff;left:1188.00px;transform-origin:0 0;transform:scaleX(0.7668);">_</span><span class="t" style="top:642.00px;font-size:12.2px;color:#ffffff;left:960.30px;transform-origin:0 0;transform:scaleX(0.9312);">Device</span><span class="t" style="top:641.00px;font-size:12.2px;color:#ffffff;left:1188.00px;transform-origin:0 0;transform:scaleX(0.7668);">_</span><span class="t" style="top:657.00px;font-size:12.2px;color:#ffffff;left:960.30px;transform-origin:0 0;transform:scaleX(0.9462);">Type</span><span class="t" style="top:656.00px;font-size:12.2px;color:#ffffff;left:1188.00px;transform-origin:0 0;transform:scaleX(0.7668);">_</span><span class="t" style="top:672.00px;font-size:12.2px;color:#ffffff;left:960.30px;transform-origin:0 0;transform:scaleX(0.9313);">Device ID</span><span class="t" style="top:671.00px;font-size:12.2px;color:#ffffff;left:1188.00px;transform-origin:0 0;transform:scaleX(0.7668);">_</span><span class="t" style="top:687.00px;font-size:12.2px;color:#ffffff;left:960.30px;transform-origin:0 0;transform:scaleX(0.9340);">Revision ID</span><span class="t" style="top:686.00px;font-size:12.2px;color:#ffffff;left:1188.00px;transform-origin:0 0;transform:scaleX(0.7668);">_</span><span class="t" style="top:702.00px;font-size:12.2px;color:#ffffff;left:960.30px;transform-origin:0 0;transform:scaleX(0.8966);">Flash size</span><span class="t" style="top:701.00px;font-size:12.2px;color:#ffffff;left:1188.00px;transform-origin:0 0;transform:scaleX(0.7668);">_</span><span class="t" style="top:717.00px;font-size:12.2px;color:#ffffff;left:960.30px;transform-origin:0 0;transform:scaleX(0.8238);">CPU</span><span class="t" style="top:716.00px;font-size:12.2px;color:#ffffff;left:1188.00px;transform-origin:0 0;transform:scaleX(0.7668);">_</span><div style="left:879px;top:15.9px;width:42px;height:40px;border:1px dashed #2a9fe0;"></div><svg style="left:883px;top:19px;" width="34" height="34" viewBox="0 0 34 34"><g fill="none" stroke="#3ea6e0"><circle cx="17" cy="17" r="15.7" stroke-width="1.3"/><circle cx="17" cy="17" r="14.3" stroke-width="0.5"/><circle cx="17" cy="17" r="10.6" stroke-width="1"/></g><path id="arcT" d="M5.6 17 A11.4 11.4 0 0 1 28.4 17" fill="none"/><path id="arcB" d="M3.1 17 A13.9 13.9 0 0 0 30.9 17" fill="none"/><text font-family="Liberation Sans,sans-serif" font-size="3.9" font-weight="700" fill="#3ea6e0" text-anchor="middle"><textPath href="#arcT" startOffset="50%">LONGEVITY</textPath></text><text font-family="Liberation Sans,sans-serif" font-size="3.7" font-weight="700" fill="#3ea6e0" text-anchor="middle"><textPath href="#arcB" startOffset="50%">COMMITMENT</textPath></text><text x="16.6" y="19.4" font-family="Liberation Sans,sans-serif" font-size="13.6" font-weight="700" fill="#3ea6e0" text-anchor="middle">10</text><text x="18.6" y="24" font-family="Liberation Sans,sans-serif" font-size="4.2" font-weight="700" fill="#3ea6e0" text-anchor="middle" transform="rotate(-6 18 23)">YEARS</text></svg><svg style="left:936px;top:23.8px;" width="24" height="24.2" viewBox="0 0 24 24.2"><rect width="24" height="24.2" rx="1.2" fill="#4464b0"/><path d="M12.7 24.2 V14.9 H9.3 V11.2 H12.7 V8.6 Q12.7 4 17.6 4 H20.8 V7.7 H18.9 Q17.5 7.7 17.5 9.2 V11.2 H20.6 L20.1 14.9 H17.5 V24.2 Z" fill="#f8faf9"/></svg><svg style="left:980.3px;top:23.8px;" width="33.5" height="24.2" viewBox="0 0 33.5 24.2"><rect width="33.5" height="24.2" rx="6.5" fill="#fe0000"/><path d="M12.8 7 L22 12.1 L12.8 17.2 Z" fill="#ffffff"/></svg><svg style="left:1040px;top:26.2px;" width="19.5" height="19.8" viewBox="0 0 24 24"><path fill="#2aa3ef" d="M23.953 4.57a10 10 0 01-2.825.775 4.958 4.958 0 002.163-2.723c-.951.555-2.005.959-3.127 1.184a4.92 4.92 0 00-8.384 4.482C7.69 8.095 4.067 6.13 1.64 3.162a4.822 4.822 0 00-.666 2.475c0 1.71.87 3.213 2.188 4.096a4.904 4.904 0 01-2.228-.616v.06a4.923 4.923 0 003.946 4.827 4.996 4.996 0 01-2.212.085 4.936 4.936 0 004.604 3.417 9.867 9.867 0 01-6.102 2.105c-.39 0-.779-.023-1.17-.067a13.995 13.995 0 007.557 2.209c9.053 0 13.998-7.496 13.998-13.985 0-.21 0-.42-.015-.63A9.935 9.935 0 0024 4.59z"/></svg><svg style="left:1084px;top:22px;" width="28" height="28" viewBox="0 0 28 28"><g stroke="#04234d" stroke-width="0.9"><path d="M12.6 14.6 L8.2 2.8 M12.6 14.6 L24.4 10.5 M12.6 14.6 L3 14.2 M12.6 14.6 L6 24.3 M12.6 14.6 L23.7 23.1"/></g><g fill="#04234d"><circle cx="12.6" cy="14.6" r="2.7"/><circle cx="8.2" cy="2.8" r="1.4"/><circle cx="24.4" cy="10.5" r="1.6"/><circle cx="3" cy="14.2" r="1.3"/><circle cx="6" cy="24.3" r="1.7"/><circle cx="23.7" cy="23.1" r="2.4"/></g></svg><svg style="left:1125px;top:15px;" width="72" height="42" viewBox="0 0 1216 709"><g fill="#04234d"><path d="M330 85 H1100 L1072 160 H400 Q300 165 290 270 Q295 310 330 350 L450 490 V520 H85 L235 160 Q260 90 330 85 Z"/><path d="M390 265 H770 L630 620 H485 Q550 570 550 480 Q545 440 510 400 L390 285 Z"/><path d="M890 265 H1030 L940 520 Q905 615 830 620 H740 Z"/></g></svg><div style="left:0px;top:728px;width:1216px;height:40px;background:#161414;"></div><div style="left:0px;top:728px;width:317.5px;height:40px;background:#f1f1f1;"></div><div style="left:0px;top:728px;width:317.5px;height:1px;background:#d9d9d9;"></div><span class="t" style="top:742.00px;font-size:14.6px;color:#2b2b2b;left:13.40px;transform-origin:0 0;transform:scaleX(0.9981);">Wpisz tu wyszukiwane słowa</span><div style="left:0px;top:743px;width:1.4px;height:6px;background:#333;"></div><svg style="left:331px;top:735px;" width="26" height="25" viewBox="0 0 26 25"><path d="M9 2.2 L24 7.4 V18 L9 12.6 Z" fill="#4fb3ec"/><path d="M9 2.2 L24 7.4 V9 L9 3.8 Z" fill="#8fd0f5"/><path d="M1.4 19.2 L11.5 15.6 L20.6 19 L10.4 23 Z" fill="#e4e6e8"/><path d="M13 14.6 L17.5 16.2 L17.5 17.6 L13 16 Z" fill="#b8bcc0"/></svg><svg style="left:382px;top:738.5px;" width="22" height="19" viewBox="0 0 22 19"><path d="M0.4 1.4 Q0.4 0.6 1.2 0.6 H7.6 L9.8 2.6 H21 Q21.6 2.6 21.6 3.4 V17.2 Q21.6 18 20.8 18 H1.2 Q0.4 18 0.4 17.2 Z" fill="#f5b83d"/><path d="M0.4 4.4 H21.6 V17.2 Q21.6 18 20.8 18 H1.2 Q0.4 18 0.4 17.2 Z" fill="#fdd86b"/><path d="M4.6 18 V11.4 Q4.6 10.4 5.6 10.4 H16.8 Q17.8 10.4 17.8 11.4 V18 H14.2 V14.2 H8.2 V18 Z" fill="#3b96dd"/></svg><svg style="left:430.8px;top:736.7px;" width="22.6" height="22" viewBox="0 0 22.6 22"><ellipse cx="11.3" cy="11" rx="11.3" ry="11" fill="#e21a2c"/><ellipse cx="11.3" cy="11" rx="4.7" ry="7.8" fill="#161414"/></svg><svg style="left:479.6px;top:736.6px;" width="22.8" height="22.8" viewBox="0 0 22.8 22.8"><circle cx="11.4" cy="11.4" r="11.2" fill="#db4437"/><path d="M11.4 11.4 L1.7 5.8 A11.2 11.2 0 0 0 11 22.6 L16.2 14.2 Z" fill="#23a566"/><path d="M11.4 11.4 L21.1 5.8 A11.2 11.2 0 0 1 10.6 22.58 L16.4 13.6 Z" fill="#fdd14b"/><path d="M1.7 5.8 A11.2 11.2 0 0 1 21.1 5.8 L11.4 5.8 Z" fill="#e24a3b"/><circle cx="11.4" cy="11.4" r="5.4" fill="#f4f6f8"/><circle cx="11.4" cy="11.4" r="4.2" fill="#4a8af4"/></svg><svg style="left:528.6px;top:735.6px;" width="23" height="23.6" viewBox="0 0 23 23.6"><defs><radialGradient id="fx" cx="0.6" cy="0.2" r="0.9"><stop offset="0" stop-color="#ffe24a"/><stop offset="0.45" stop-color="#ff9a2a"/><stop offset="1" stop-color="#f0323a"/></radialGradient></defs><path d="M11.6 23.4 C4.8 23.4 0.4 18.6 0.4 13 C0.4 9.6 1.8 7.2 3.6 5.4 C3.8 6.8 4.4 7.6 5.2 8 C5.6 5 8 3 10.2 0.4 C11.4 4 15 4.2 18 7.2 C17.8 5.8 17.4 5 16.8 4 C21 6.4 22.8 10 22.8 13.4 C22.8 19.2 17.8 23.4 11.6 23.4 Z" fill="url(#fx)"/><circle cx="10.6" cy="13" r="5.2" fill="#8a3fd0"/><path d="M5.8 10.4 C8 8.6 11.4 9 13 10.6 C11 10.6 9.6 11.6 9.6 13 C9.6 14.6 11.4 15.4 13.4 14.6 C12.4 17.2 8.4 18 6.4 15.8 C5.2 14.4 5.2 12 5.8 10.4 Z" fill="#ff7a2e"/></svg><svg style="left:576.5px;top:736px;" width="25.2" height="24" viewBox="0 0 25.2 24"><path d="M6.5 1 L9.5 4.5 L13 2.6 L15.2 0.6 L17.6 2.4 L16.2 6 L16.8 9 L22.6 9.6 L24.6 12 L22.2 14.4 L24 17 L21.4 18.8 L18.4 16 L15.8 16.6 L16.6 21.6 L13.6 23.6 L10.6 22 L10 17 L7.4 14.6 L1.6 14.8 L0.4 11.8 L3.6 9.6 L6.6 9.8 L7 7.2 L4 4.2 L2.2 1.8 Z" fill="#fb0207"/><path d="M3 2.6 L8 6.6" stroke="#5a0a0a" stroke-width="1"/></svg><div style="left:569px;top:766px;width:40px;height:2px;background:#76b9ed;"></div><div style="left:614.2px;top:728px;width:47.8px;height:40px;background:#343536;"></div><div style="left:614.2px;top:766px;width:47.8px;height:2px;background:#76b9ed;"></div><div style="left:626px;top:736px;width:24px;height:23.8px;background:#3eaadc;"></div><span class="t" style="top:741.00px;font-size:13.5px;color:#ffffff;font-weight:700;left:628.50px;transform-origin:0 0;transform:scaleX(0.8616);">Prg</span><svg style="left:695.5px;top:730px;" width="8" height="17" viewBox="0 0 8 17"><path d="M0.6 0.6 H3.2 M4.8 0.6 H7.4 M0.6 16.2 H3.2 M4.8 16.2 H7.4 M4 1 V16" stroke="#f0f0f0" stroke-width="1.2" fill="none"/></svg><svg style="left:1045.5px;top:744px;" width="13.5" height="8" viewBox="0 0 13.5 8"><path d="M0.8 7 L6.6 1.2 L12.6 7" stroke="#f2f2f2" stroke-width="1.3" fill="none"/></svg><svg style="left:1070px;top:741.6px;" width="14.5" height="14" viewBox="0 0 14.5 14"><g fill="none" stroke="#f2f2f2" stroke-width="1.2"><path d="M1.2 13.2 A11.6 11.6 0 0 1 12.8 1.6"/><path d="M4.4 13.2 A8.4 8.4 0 0 1 12.8 4.8"/><path d="M7.6 13.2 A5.2 5.2 0 0 1 12.8 8"/></g><circle cx="11.8" cy="12" r="1.5" fill="#f2f2f2"/></svg><svg style="left:1091.5px;top:741px;" width="18" height="14" viewBox="0 0 18 14"><g fill="none" stroke="#f2f2f2" stroke-width="1.1"><path d="M0.8 4.6 H3.4 L6.8 1.2 V12.8 L3.4 9.4 H0.8 Z"/><path d="M9 4.6 Q10.6 7 9 9.4"/><path d="M11.4 2.8 Q14.2 7 11.4 11.2"/><path d="M13.8 1 Q17.6 7 13.8 13"/></g></svg><svg style="left:1115.5px;top:742.4px;" width="17.5" height="11.4" viewBox="0 0 17.5 11.4"><g fill="none" stroke="#f2f2f2" stroke-width="1.1"><rect x="5.4" y="2.2" width="10" height="7.6"/><path d="M16.4 4.4 V7.6"/><path d="M2.8 0.4 V2.6 M0.8 2.6 H4.8 V4.6 Q4.8 6 2.8 6 Q0.8 6 0.8 4.6 Z M2.8 6 V10.8 H5.4"/></g><rect x="6.6" y="3.4" width="3.6" height="5.2" fill="#f2f2f2"/></svg><span class="t" style="top:742.00px;font-size:12px;color:#f4f4f4;left:1143.30px;transform-origin:0 0;transform:scaleX(0.8828);">POL</span><span class="t" style="top:733.00px;font-size:12px;color:#f4f4f4;left:1190.70px;transform-origin:0 0;transform:scaleX(0.9324);">20:53</span><span class="t" style="top:751.00px;font-size:12px;color:#f4f4f4;left:1177.80px;transform-origin:0 0;transform:scaleX(0.9490);">08.09.2020</span>
</div></body></html>
